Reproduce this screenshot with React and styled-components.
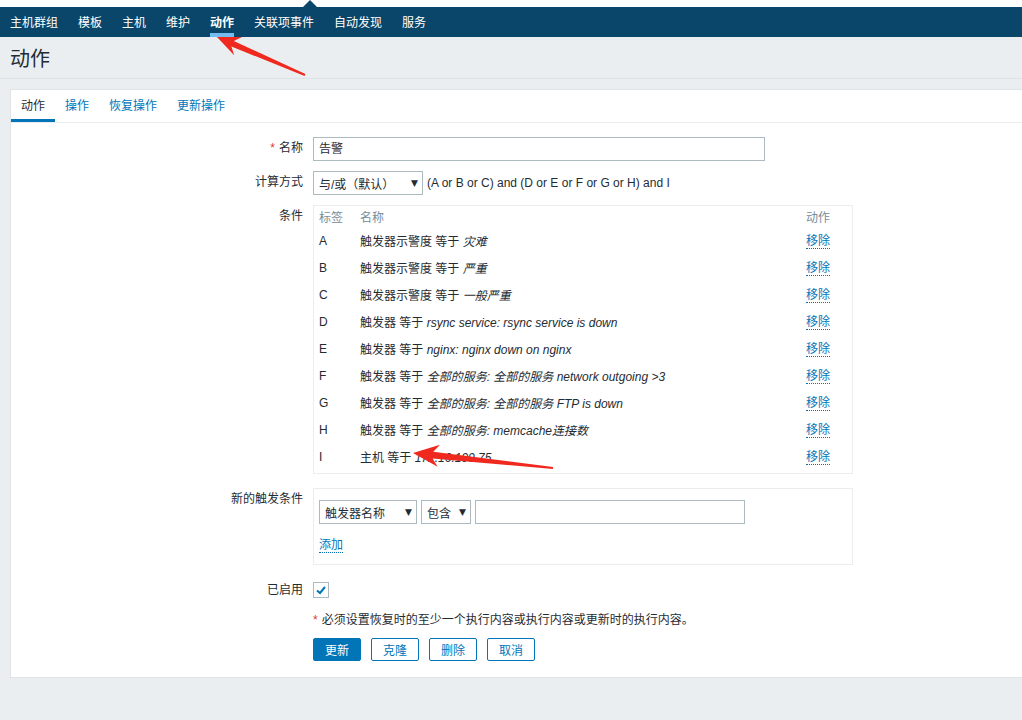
import React from 'react'
import styled, { createGlobalStyle } from 'styled-components'

const GlobalStyle = createGlobalStyle`
  body {
    margin: 0;
    background: #ebeef0;
    font-family: "Liberation Sans", Arial, "Noto Sans CJK SC", sans-serif;
    font-size: 12px;
    color: #1f2c33;
  }
`

const Page = styled.div`
  position: relative;
  min-height: 720px;
`

const TopStrip = styled.div`
  height: 7px;
  background: #fff;
`

const NavBar = styled.nav`
  position: relative;
  display: flex;
  gap: 20px;
  height: 30px;
  padding: 0 10px;
  background: #0a466a;

  &::before {
    content: '';
    position: absolute;
    top: -7px;
    left: 303px;
    border-left: 7px solid transparent;
    border-right: 7px solid transparent;
    border-bottom: 7px solid #0a466a;
  }
`

const NavItem = styled.a`
  display: flex;
  align-items: center;
  color: #fff;
  font-size: 12px;
  font-weight: ${({ active }) => (active ? 'bold' : 'normal')};
  border-bottom: 4px solid ${({ active }) => (active ? '#74bdf0' : 'transparent')};
  padding-top: 2px;
  box-sizing: border-box;
`

const Header = styled.header`
  display: flex;
  align-items: center;
  height: 41px;
  padding: 0 10px;
  border-bottom: 1px solid #dde2e6;
`

const Title = styled.h1`
  margin: 0;
  font-size: 20px;
  font-weight: normal;
  color: #1f2c33;
`

const Panel = styled.div`
  margin: 10px 0 0 10px;
  height: 589px;
  box-sizing: border-box;
  background: #fff;
  border: 1px solid #dfe4e7;
  border-right: none;
`

const TabList = styled.div`
  display: flex;
  height: 32px;
  border-bottom: 1px solid #ebeef0;
`

const Tab = styled.a`
  display: flex;
  align-items: center;
  padding: 0 10px;
  box-sizing: border-box;
  color: ${({ active }) => (active ? '#1f2c33' : '#0275b8')};
  border-bottom: 3px solid ${({ active }) => (active ? '#0275b8' : 'transparent')};
`

const Form = styled.div`
  padding-top: 14px;
`

const Row = styled.div`
  display: grid;
  grid-template-columns: 292px 1fr;
  column-gap: 10px;
  margin-top: ${({ gap }) => gap || 0}px;
`

const Label = styled.div`
  text-align: right;
  line-height: 22px;
  white-space: nowrap;
`

const Required = styled.span`
  color: #e33734;
  margin-right: 4px;
`

const Field = styled.div`
  display: flex;
  align-items: center;
`

const TextInput = styled.div`
  width: ${({ w }) => w}px;
  height: 24px;
  box-sizing: border-box;
  border: 1px solid #acbbc2;
  padding: 0 5px;
  line-height: 22px;
  background: #fff;
`

const Select = styled.div`
  display: flex;
  align-items: center;
  justify-content: space-between;
  width: ${({ w }) => w}px;
  height: 24px;
  box-sizing: border-box;
  border: 1px solid #acbbc2;
  padding: 0 4px 0 5px;
  background: #fff;
  white-space: nowrap;

  &::after {
    content: '▼';
    font-family: "DejaVu Sans", sans-serif;
    font-size: 9px;
    color: #1f2c33;
  }
`

const Hint = styled.span`
  margin-left: 4px;
`

const Box = styled.div`
  width: 540px;
  box-sizing: border-box;
  border: 1px solid #ebeef0;
  padding: ${({ pad }) => pad};
`

const Grid = styled.div`
  display: grid;
  grid-template-columns: 41px 1fr 41px;
  align-items: center;
  height: ${({ h }) => h}px;
  color: ${({ head }) => (head ? '#768d99' : '#1f2c33')};
`

const Link = styled.a`
  color: #0275b8;
  border-bottom: 1px dotted #0275b8;
  line-height: 14px;
  cursor: pointer;
`

const Em = styled.i``

const Controls = styled.div`
  display: flex;
  gap: 4px;
  align-items: center;
`

const AddLink = styled.div`
  margin-top: 13px;
  line-height: 16px;
`

const Check = styled.span`
  display: flex;
  align-items: center;
  justify-content: center;
  width: 16px;
  height: 16px;
  box-sizing: border-box;
  border: 1px solid #acbbc2;
  background: #fff;
`

const Note = styled.div`
  line-height: 22px;
`

const Buttons = styled.div`
  display: flex;
  gap: 10px;
`

const Button = styled.button`
  height: 23px;
  padding: 0 11px;
  border: 1px solid #0275b8;
  border-radius: 2px;
  background: ${({ primary }) => (primary ? '#0275b8' : '#fff')};
  color: ${({ primary }) => (primary ? '#fff' : '#0275b8')};
  font-family: inherit;
  font-size: 12px;
`

const Overlay = styled.svg`
  position: absolute;
  top: 0;
  left: 0;
  pointer-events: none;
`

const navItems = ['主机群组', '模板', '主机', '维护', '动作', '关联项事件', '自动发现', '服务']
const tabs = ['动作', '操作', '恢复操作', '更新操作']

const conditions = [
  ['A', '触发器示警度 等于 ', '灾难'],
  ['B', '触发器示警度 等于 ', '严重'],
  ['C', '触发器示警度 等于 ', '一般严重'],
  ['D', '触发器 等于 ', 'rsync service: rsync service is down'],
  ['E', '触发器 等于 ', 'nginx: nginx down on nginx'],
  ['F', '触发器 等于 ', '全部的服务: 全部的服务 network outgoing >3'],
  ['G', '触发器 等于 ', '全部的服务: 全部的服务 FTP is down'],
  ['H', '触发器 等于 ', '全部的服务: memcache连接数'],
  ['I', '主机 等于 ', '172.16.190.75'],
]

function arrowPoints([sx, sy], [tx, ty], hl, hw, ws) {
  const len = Math.hypot(tx - sx, ty - sy)
  const dx = (tx - sx) / len
  const dy = (ty - sy) / len
  const nx = -dy
  const ny = dx
  const p = (back, side) => `${tx - dx * back + nx * side},${ty - dy * back + ny * side}`
  return [
    `${sx + nx},${sy + ny}`,
    p(hl, ws),
    p(hl + 6, hw),
    `${tx},${ty}`,
    p(hl + 6, -hw),
    p(hl, -ws),
    `${sx - nx},${sy - ny}`,
  ].join(' ')
}

function App() {
  return (
    <Page>
      <GlobalStyle />
      <TopStrip />
      <NavBar>
        {navItems.map(item => (
          <NavItem key={item} active={item === '动作'}>
            {item}
          </NavItem>
        ))}
      </NavBar>
      <Header>
        <Title>动作</Title>
      </Header>
      <Panel>
        <TabList>
          {tabs.map(tab => (
            <Tab key={tab} active={tab === '动作'}>
              {tab}
            </Tab>
          ))}
        </TabList>
        <Form>
          <Row>
            <Label>
              <Required>*</Required>名称
            </Label>
            <Field>
              <TextInput w={452}>告警</TextInput>
            </Field>
          </Row>
          <Row gap={10}>
            <Label>计算方式</Label>
            <Field>
              <Select w={110}>与/或（默认）</Select>
              <Hint>(A or B or C) and (D or E or F or G or H) and I</Hint>
            </Field>
          </Row>
          <Row gap={10}>
            <Label>条件</Label>
            <Field>
              <Box pad="0 5px 3px">
                <Grid head h={21}>
                  <span>标签</span>
                  <span>名称</span>
                  <span>动作</span>
                </Grid>
                {conditions.map(([tag, text, value]) => (
                  <Grid key={tag} h={27}>
                    <span>{tag}</span>
                    <span>
                      {text}
                      <Em>{value}</Em>
                    </span>
                    <span>
                      <Link>移除</Link>
                    </span>
                  </Grid>
                ))}
              </Box>
            </Field>
          </Row>
          <Row gap={14}>
            <Label>新的触发条件</Label>
            <Field>
              <Box pad="11px 5px 11px">
                <Controls>
                  <Select w={98}>触发器名称</Select>
                  <Select w={50}>包含</Select>
                  <TextInput w={270} />
                </Controls>
                <AddLink>
                  <Link>添加</Link>
                </AddLink>
              </Box>
            </Field>
          </Row>
          <Row gap={14}>
            <Label>已启用</Label>
            <Field>
              <Check>
                <svg width="12" height="12" viewBox="0 0 12 12">
                  <polyline points="2,6.5 5,9 10,3" fill="none" stroke="#0275b8" strokeWidth="2" />
                </svg>
              </Check>
            </Field>
          </Row>
          <Row gap={8}>
            <Label />
            <Note>
              <Required>*</Required>必须设置恢复时的至少一个执行内容或执行内容或更新时的执行内容。
            </Note>
          </Row>
          <Row gap={7}>
            <Label />
            <Buttons>
              <Button primary>更新</Button>
              <Button>克隆</Button>
              <Button>删除</Button>
              <Button>取消</Button>
            </Buttons>
          </Row>
        </Form>
      </Panel>
      <Overlay width="1022" height="720">
        <polygon points={arrowPoints([305, 75], [217, 37], 17, 10, 3)} fill="#f0291f" />
        <polygon points={arrowPoints([553, 468], [413, 453], 20, 11, 3.5)} fill="#f0291f" />
      </Overlay>
    </Page>
  )
}

export default App
